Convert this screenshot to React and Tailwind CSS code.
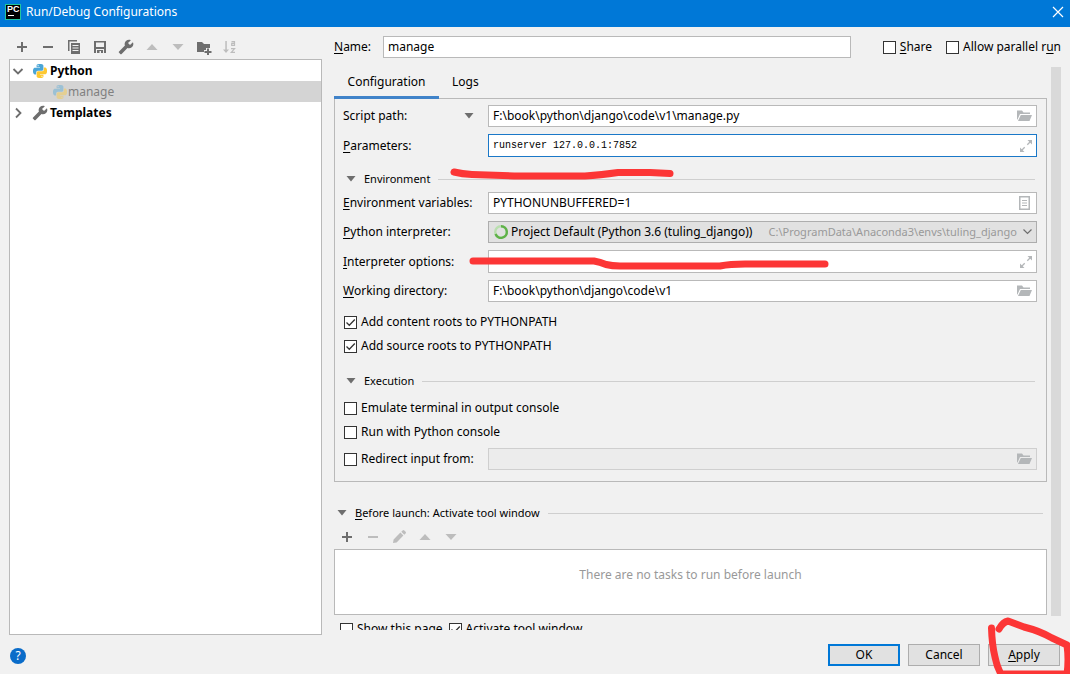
import React from "react";

const PY_TOP =
  "M14.25.18l.9.2.73.26.59.3.45.32.34.34.25.34.16.33.1.3.04.26.02.2-.01.13V8.5l-.05.63-.13.55-.21.46-.26.38-.3.31-.33.25-.35.19-.35.14-.33.1-.3.07-.26.04-.21.02H8.77l-.69.05-.59.14-.5.22-.41.27-.33.32-.27.35-.2.36-.15.37-.1.35-.07.32-.04.27-.02.21v3.06H3.17l-.21-.03-.28-.07-.32-.12-.35-.18-.36-.26-.36-.36-.35-.46-.32-.59-.28-.73-.21-.88-.14-1.05-.05-1.23.06-1.22.16-1.04.24-.87.32-.71.36-.57.4-.44.42-.33.42-.24.4-.16.36-.1.32-.05.24-.01h.16l.06.01h8.16v-.83H6.18l-.01-2.75-.02-.37.05-.34.11-.31.17-.28.25-.26.31-.23.38-.2.44-.18.51-.15.58-.12.64-.1.71-.06.77-.04.84-.02 1.27.05zm-6.3 1.98l-.23.33-.08.41.08.41.23.34.33.22.41.09.41-.09.33-.22.23-.34.08-.41-.08-.41-.23-.33-.33-.22-.41-.09-.41.09z";
const PY_BOTTOM =
  "M21.1 6.11l.28.06.32.12.35.18.36.27.36.35.35.47.32.59.28.73.21.88.14 1.04.05 1.23-.06 1.23-.16 1.04-.24.86-.32.71-.36.57-.4.45-.42.33-.42.24-.4.16-.36.09-.32.05-.24.02-.16-.01h-8.22v.82h5.84l.01 2.76.02.36-.05.34-.11.31-.17.29-.25.25-.31.24-.38.2-.44.17-.51.15-.58.13-.64.09-.71.07-.77.04-.84.01-1.27-.04-1.07-.14-.9-.2-.73-.25-.59-.3-.45-.33-.34-.34-.25-.34-.16-.33-.1-.3-.04-.25-.02-.2.01-.13v-5.34l.05-.64.13-.54.21-.46.26-.38.3-.32.33-.24.35-.2.35-.14.33-.1.3-.06.26-.04.21-.02.13-.01h5.84l.69-.05.59-.14.5-.21.41-.28.33-.32.27-.35.2-.36.15-.36.1-.35.07-.32.04-.28.02-.21V6.07h2.09l.14.01zm-6.47 14.25l-.23.33-.08.41.08.41.23.33.33.23.41.08.41-.08.33-.23.23-.33.08-.41-.08-.41-.23-.33-.33-.23-.41-.08-.41.08z";

function Icon({ children, className = "" }) {
  return (
    <svg viewBox="0 0 16 16" className={`block size-4 shrink-0 ${className}`} fill="currentColor" aria-hidden="true">
      {children}
    </svg>
  );
}

const PythonIcon = ({ className }) => (
  <svg viewBox="0 0 24 24" className={`block size-[14px] shrink-0 ${className || ""}`} aria-hidden="true">
    <path d={PY_TOP} fill="#4aa5d6" />
    <path d={PY_BOTTOM} fill="#fdc830" />
  </svg>
);
const Plus = () => <Icon><path d="M7 3h2v4h4v2H9v4H7V9H3V7h4z" /></Icon>;
const Minus = () => <Icon><path d="M3 7h10v2H3z" /></Icon>;
const Up = () => <Icon><path d="M2.500 11 8 5l5.500 6z" /></Icon>;
const Down = () => <Icon><path d="M2.500 5h11L8 11z" /></Icon>;
const Copy = () => (
  <Icon>
    <path d="M2 1h9v1.500H3.500V12H2z" />
    <path fillRule="evenodd" d="M5 4h9v11H5zM6.500 6v1h6V6zm0 2.500v1h6v-1zm0 2.500v1h6v-1z" />
  </Icon>
);
const Save = () => (
  <Icon>
    <path fillRule="evenodd" d="M2 2h12v12h-2v-4H4v4H2zM4 3.500V8h8V3.500z" />
    <path d="M5 11h6v3H9v-2H7.500v2H5z" />
  </Icon>
);
const Wrench = () => (
  <svg viewBox="0 0 24 24" className="block size-4 shrink-0 -scale-x-100" fill="currentColor" aria-hidden="true">
    <path d="M22.700 19l-9.100-9.100c.9-2.300.4-5-1.500-6.900-2-2-5-2.400-7.400-1.300L9 6 6 9 1.600 4.700C.4 7.100.9 10.100 2.900 12.100c1.900 1.900 4.600 2.400 6.900 1.500l9.100 9.100c.4.4 1 .4 1.400 0l2.300-2.300c.5-.4.5-1.100.1-1.400z" />
  </svg>
);
const FolderPlus = () => (
  <Icon>
    <path d="M1 3h5l2 2h6v4h-4v2H8v2H1z" />
    <path d="M11 9.500h2V12h2.500v2H13v2h-2v-2H8.500v-2H11z" />
  </Icon>
);
const SortAz = () => (
  <Icon>
    <path d="M3.300 2h1.500v8.500H7L4 14 1 10.500h2.300z" />
    <g fill="none" stroke="currentColor" strokeWidth="1.200">
      <path d="M9.500 2.600h3v4.400M12.500 4.400h-2.800v2h2.800M9 9.600h3.600L9.300 13.400h3.700" />
    </g>
  </Icon>
);
const Pencil = () => (
  <Icon>
    <path d="M2 14l.6-3.600L9.400 3.600l3 3-6.800 6.800zM10.300 2.700l1.300-1.300a1.200 1.200 0 0 1 1.700 0l1.300 1.300a1.200 1.200 0 0 1 0 1.700l-1.300 1.300z" />
  </Icon>
);
const Folder = () => (
  <Icon>
    <path d="M1 2.500h5l1.500 2H14V6H4L1.500 11.500H1z" />
    <path d="M4.800 7H16l-2.500 6H2z" />
  </Icon>
);
const Expand = () => (
  <Icon>
    <path d="M11.500 2H16v4.500zM4 9.500V14h4.500z" />
    <path d="M14.500 3.500 11.300 6.700M5.500 12.500l3.200-3.200" stroke="currentColor" strokeWidth="1.300" />
  </Icon>
);
const Doc = () => (
  <Icon>
    <path fillRule="evenodd" d="M3 1h11v14H3zM4.500 2.500v11h8v-11z" />
    <path d="M6 5h5v1H6zm0 2.500h5v1H6zM6 10h5v1H6z" />
  </Icon>
);
const Chevron = ({ className = "", thin }) => (
  <Icon className={className}>
    <path
      d={thin ? "M4.500 5.500 8.500 9.500 12.500 5.500" : "M3.500 6 8 10.500 12.500 6"}
      fill="none"
      stroke="currentColor"
      strokeWidth={thin ? 1.2 : 1.8}
    />
  </Icon>
);
const Triangle = () => (
  <svg viewBox="0 0 10 6" className="block h-[6px] w-[10px] shrink-0" fill="#6e6e6e" aria-hidden="true">
    <path d="M0.500 0h9L5 5.500z" />
  </svg>
);

// Underlines the keyboard mnemonic that follows "&".
function Label({ text }) {
  const i = text.indexOf("&");
  if (i < 0) return text;
  return (
    <>
      {text.slice(0, i)}
      <span className="underline underline-offset-2">{text[i + 1]}</span>
      {text.slice(i + 2)}
    </>
  );
}

function ToolButton({ label, disabled, children }) {
  return (
    <button type="button" aria-label={label} disabled={disabled} className="text-[#6e6e6e] disabled:text-[#bdbdbd]">
      {children}
    </button>
  );
}

function Check({ label, checked }) {
  return (
    <label className="flex items-center gap-1 whitespace-nowrap">
      <span className="grid size-[13px] shrink-0">
        <input
          type="checkbox"
          defaultChecked={checked}
          className="peer col-start-1 row-start-1 size-[13px] appearance-none border border-[#333] bg-white"
        />
        <svg viewBox="0 0 13 13" className="pointer-events-none invisible col-start-1 row-start-1 size-[13px] peer-checked:visible" aria-hidden="true">
          <path d="M2.500 6.500 5.300 9.300 10.800 3.500" fill="none" stroke="#333" strokeWidth="1.300" />
        </svg>
      </span>
      <span><Label text={label} /></span>
    </label>
  );
}

function Field({ id, value, action, icon, focused, disabled, mono, tall, label }) {
  return (
    <div
      className={`flex min-w-0 flex-1 items-center border pr-1 pl-1 ${tall ? "h-[23px]" : "h-[22px]"} ${
        focused ? "border-[#1a78c8]" : disabled ? "border-[#cfcfcf]" : "border-[#b9b9b9]"
      } ${disabled ? "bg-[#ececec]" : "bg-white"}`}
    >
      <input
        id={id}
        type="text"
        aria-label={label}
        defaultValue={value}
        disabled={disabled}
        className={`min-w-0 flex-1 bg-transparent outline-none ${mono ? "font-['Liberation_Mono',monospace] text-[10px]" : ""}`}
      />
      {icon && (
        <button type="button" aria-label={action} disabled={disabled} className="text-[#b4b7b9]">
          {icon}
        </button>
      )}
    </div>
  );
}

function Row({ id, label, extra, children }) {
  return (
    <div className="flex items-center">
      <div className="flex w-[145px] shrink-0 items-center justify-between pr-[14px]">
        <label htmlFor={id} className="whitespace-nowrap"><Label text={label} /></label>
        {extra}
      </div>
      {children}
    </div>
  );
}

function Section({ title, className = "" }) {
  return (
    <div className={`flex h-5 items-center ${className}`}>
      <button type="button" className="flex items-center gap-2 text-[11px]">
        <Triangle />
        <span><Label text={title} /></span>
      </button>
      <span className="ml-2 h-px flex-1 bg-[#cfcfcf]" />
    </div>
  );
}

const BTN = "h-[22px] w-[72px] bg-[#e1e1e1] text-center";

export default function App() {
  return (
    <div className="relative flex h-screen flex-col overflow-hidden bg-[#f1f1f1] font-['Noto_Sans',sans-serif] text-[12px] leading-4 text-black">
      <header className="flex h-[27px] shrink-0 items-center bg-[#0078d7] pr-[6px] pb-1 pl-[5px] text-white">
        <span className="flex size-4 flex-col border border-[#21c5a0] bg-black pl-px font-['Liberation_Sans',sans-serif] text-[9px] leading-[9px] font-bold">
          PC
          <span className="ml-px mt-px h-px w-[6px] bg-white" />
        </span>
        <h1 className="ml-[5px] flex-1 text-[12px]">Run/Debug Configurations</h1>
        <button type="button" aria-label="Close">
          <svg viewBox="0 0 12 12" className="block size-3" aria-hidden="true">
            <path d="M1 1l10 10M11 1L1 11" stroke="#fff" strokeWidth="1.200" />
          </svg>
        </button>
      </header>

      <div className="flex min-h-0 flex-1 gap-3 px-[9px]">
        <aside className="flex w-[313px] shrink-0 flex-col pt-3">
          <div className="flex h-5 items-start gap-[10px] pl-[5px]">
            <ToolButton label="Add"><Plus /></ToolButton>
            <ToolButton label="Remove"><Minus /></ToolButton>
            <ToolButton label="Copy"><Copy /></ToolButton>
            <ToolButton label="Save"><Save /></ToolButton>
            <ToolButton label="Edit templates"><Wrench /></ToolButton>
            <ToolButton label="Move up" disabled><Up /></ToolButton>
            <ToolButton label="Move down" disabled><Down /></ToolButton>
            <ToolButton label="New folder"><FolderPlus /></ToolButton>
            <ToolButton label="Sort" disabled><SortAz /></ToolButton>
          </div>
          <ul className="flex-1 border border-[#b9b9b9] bg-white">
            <li className="flex h-[21px] items-center font-bold">
              <Chevron className="mr-[7px] text-[#6e6e6e]" />
              <PythonIcon />
              <span className="ml-[3px]">Python</span>
            </li>
            <li className="flex h-[21px] items-center bg-[#d4d4d4] pl-[43px] text-[#808080]">
              <PythonIcon className="opacity-40" />
              <span className="ml-px">manage</span>
            </li>
            <li className="flex h-[21px] items-center font-bold">
              <Chevron className="mr-[6px] -rotate-90 text-[#6e6e6e]" />
              <span className="text-[#6e6e6e]"><Wrench /></span>
              <span className="ml-[2px]">Templates</span>
            </li>
          </ul>
        </aside>

        <main className="flex min-w-0 flex-1 flex-col pt-[9px]">
          <div className="flex items-center">
            <label htmlFor="name" className="w-[49px]"><Label text="&Name:" /></label>
            <Field id="name" value="manage" />
            <div className="ml-8 flex gap-[14px]">
              <Check label="&Share" />
              <Check label="Allow parallel r&un" />
            </div>
          </div>

          <div className="mt-[9px] flex min-h-0 flex-1 gap-1">
            <div className="mb-[5px] min-w-0 flex-1 overflow-hidden">
              <div role="tablist" className="flex h-8">
                <button type="button" role="tab" aria-selected="true" className="w-[105px] border-b-3 border-[#4083c9]">
                  Configuration
                </button>
                <button type="button" role="tab" aria-selected="false" className="border-b-3 border-transparent px-[13px]">
                  Logs
                </button>
              </div>

              <section className="-mt-px border border-[#b9b9b9] pt-[6px] pr-[9px] pb-[11px] pl-2">
                <div className="flex flex-col gap-[7px]">
                  <Row
                    id="script"
                    label="Script path:"
                    extra={<button type="button" aria-label="Choose target kind"><Triangle /></button>}
                  >
                    <Field id="script" value="F:\book\python\django\code\v1\manage.py" action="Browse" icon={<Folder />} />
                  </Row>
                  <Row id="params" label="&Parameters:">
                    <Field id="params" value="runserver 127.0.0.1:7852" action="Expand" icon={<Expand />} focused mono tall />
                  </Row>
                </div>
                <Section title="Environment" className="mt-3 mb-[3px] pr-[2px] pl-[3px]" />
                <div className="flex flex-col gap-[7px]">
                  <Row id="env" label="&Environment variables:">
                    <Field id="env" value="PYTHONUNBUFFERED=1" action="Edit variables" icon={<Doc />} />
                  </Row>
                  <Row id="interp" label="&Python interpreter:">
                    <div className="grid h-[22px] min-w-0 flex-1 items-center border border-[#adadad] bg-[#e1e1e1]">
                      <select id="interp" className="col-start-1 row-start-1 h-5 w-full appearance-none bg-transparent pl-[22px] outline-none">
                        <option>Project Default (Python 3.6 (tuling_django))</option>
                      </select>
                      <div className="pointer-events-none col-start-1 row-start-1 flex items-center pr-px pl-1 text-[11px] text-[#999]">
                        <svg viewBox="0 0 16 16" className="size-4" fill="none" strokeWidth="2.400" aria-hidden="true">
                          <circle cx="8" cy="8" r="5.800" stroke="#b9dfae" />
                          <path d="M8 2.200A5.800 5.800 0 1 1 2.600 10" stroke="#5fb149" />
                        </svg>
                        <span className="ml-auto">C:\ProgramData\Anaconda3\envs\tuling_django</span>
                        <Chevron thin className="ml-[2px] text-[#6e6e6e]" />
                      </div>
                    </div>
                  </Row>
                  <Row id="opts" label="&Interpreter options:">
                    <Field id="opts" value="" action="Expand" icon={<Expand />} tall />
                  </Row>
                  <Row id="dir" label="&Working directory:">
                    <Field id="dir" value="F:\book\python\django\code\v1" action="Browse" icon={<Folder />} />
                  </Row>
                </div>
                <div className="mt-2 grid auto-rows-[24px] items-center justify-start pl-px">
                  <Check label="Add content roots to PYTHONPATH" checked />
                  <Check label="Add source roots to PYTHONPATH" checked />
                </div>
                <Section title="Execution" className="mt-[13px] mb-[5px] pr-[2px] pl-[3px]" />
                <div className="grid auto-rows-[24px] items-center justify-start pl-px">
                  <Check label="Emulate terminal in output console" />
                  <Check label="Run with Python console" />
                </div>
                <div className="mt-1 flex items-center">
                  <div className="w-[145px] shrink-0 pl-px"><Check label="Redirect input from:" /></div>
                  <Field label="Redirect input from" value="" action="Browse" icon={<Folder />} disabled />
                </div>
              </section>

              <Section title="&Before launch: Activate tool window" className="mt-[21px] pr-1 pl-[3px]" />
              <div className="mt-[6px] flex gap-[10px] pl-[5px]">
                <ToolButton label="Add task"><Plus /></ToolButton>
                <ToolButton label="Remove task" disabled><Minus /></ToolButton>
                <ToolButton label="Edit task" disabled><Pencil /></ToolButton>
                <ToolButton label="Move task up" disabled><Up /></ToolButton>
                <ToolButton label="Move task down" disabled><Down /></ToolButton>
              </div>
              <div className="mt-1 h-[66px] border border-[#b9b9b9] bg-white pt-[17px] text-center text-[#999]">
                There are no tasks to run before launch
              </div>
              <div className="mt-[6px] flex gap-[6px] pl-[6px]">
                <Check label="Show this page" />
                <Check label="Activate tool window" checked />
              </div>
            </div>
            <div className="mb-[19px] w-[10px] shrink-0 bg-[#d9d9d9]" />
          </div>
        </main>
      </div>

      <footer className="flex h-[39px] shrink-0 items-start gap-2 pt-[9px] pr-[10px] pl-[10px]">
        <button type="button" aria-label="Help" className="mt-1 mr-auto size-4 rounded-full bg-[#0a6cc9] text-center text-[12px] leading-4 text-white">
          ?
        </button>
        <button type="button" className={`${BTN} border-2 border-[#0078d7]`}>OK</button>
        <button type="button" className={`${BTN} border border-[#adadad]`}>Cancel</button>
        <button type="button" className={`${BTN} border border-[#adadad]`}><Label text="&Apply" /></button>
      </footer>

      <svg
        viewBox="0 0 1070 674"
        className="pointer-events-none absolute top-0 left-0 h-[674px] w-[1070px]"
        fill="none"
        stroke="#fc3636"
        strokeWidth="7"
        strokeLinecap="round"
        strokeLinejoin="round"
        aria-hidden="true"
      >
        <path d="M454 172Q462 174 472 174.500L514 176H585Q600 175 618 172.500H650L670 173.500" />
        <path d="M473 261H594Q600 262 606 264.500Q612 266 620 266H720Q730 264 745 264H825" />
        <path d="M991.500 628Q992 645 995 657Q997 667 1001 674H1067Q1069 660 1067 645L1052 638Q1040 631 1024 627L1008 621Q1003 622 999 629" />
      </svg>
    </div>
  );
}
